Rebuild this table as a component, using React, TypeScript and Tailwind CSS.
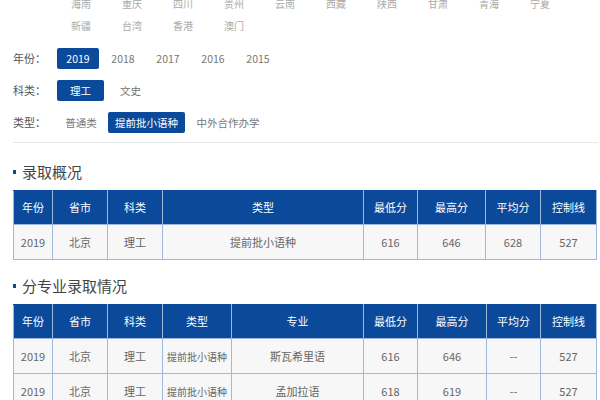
import React from 'react';

const font = {
	fontFamily: '"Noto Sans CJK SC", "Liberation Sans", sans-serif'
};

const provinceRows = [
	['海南', '重庆', '四川', '贵州', '云南', '西藏', '陕西', '甘肃', '青海', '宁夏'],
	['新疆', '台湾', '香港', '澳门']
];

interface FilterItem {
	label: string;
	width: string;
	active?: boolean;
}

const filters: { label: string; items: FilterItem[]; top: string }[] = [
	{
		label: '年份：',
		top: 'mt-[12px]',
		items: [
			{ label: '2019', width: 'w-[42px]', active: true },
			{ label: '2018', width: 'w-[42px]' },
			{ label: '2017', width: 'w-[42px]' },
			{ label: '2016', width: 'w-[42px]' },
			{ label: '2015', width: 'w-[42px]' }
		]
	},
	{
		label: '科类：',
		top: 'mt-[11px]',
		items: [
			{ label: '理工', width: 'w-[47px]', active: true },
			{ label: '文史', width: 'w-[47px]' }
		]
	},
	{
		label: '类型：',
		top: 'mt-[11px]',
		items: [
			{ label: '普通类', width: 'w-[48px]' },
			{ label: '提前批小语种', width: 'w-[77px]', active: true },
			{ label: '中外合作办学', width: 'w-[80px]' }
		]
	}
];

const FilterRow = ({ label, items, top }: (typeof filters)[number]) => (
	<div className={`flex items-center h-[21px] ${top}`}>
		<span className="w-[44px] text-[11px] text-[#555]">{label}</span>
		<div className="flex gap-[3px]">
			{items.map((item) => (
				<span
					key={item.label}
					className={`${item.width} h-[21px] flex items-center justify-center text-[10.5px] rounded-[2px] ${
						item.active ? 'bg-[#0b4a9b] text-white' : 'text-[#777]'
					}`}
				>
					{item.label}
				</span>
			))}
		</div>
	</div>
);

const SectionTitle = ({ children }: { children: React.ReactNode }) => (
	<div className="flex items-center h-[20px]">
		<span className="w-[3px] h-[4px] bg-[#0b4a9b] mr-[6px]" />
		<span className="text-[15px] text-[#444] leading-[20px]">{children}</span>
	</div>
);

const DataTable = ({
	cols,
	head,
	rows
}: {
	cols: number[];
	head: string[];
	rows: string[][];
}) => (
	<table className="table-fixed border-collapse w-[583px] text-[11px]">
		<colgroup>
			{cols.map((w, i) => (
				<col key={i} style={{ width: w }} />
			))}
		</colgroup>
		<thead>
			<tr className="h-[34px] bg-[#0b4a9b] text-white">
				{head.map((h) => (
					<th
						key={h}
						className="font-normal border border-[#9fb8dd] border-t-[#0b4a9b]"
					>
						{h}
					</th>
				))}
			</tr>
		</thead>
		<tbody>
			{rows.map((r, i) => (
				<tr key={i} className="h-[35px] bg-[#f7f7f7] text-[#666]">
					{r.map((c, j) => (
						<td
							key={j}
							className={`text-center border border-[#9fb8dd] ${
								c.length > 4 && cols.length > 8 && j === 3 ? 'text-[10px]' : ''
							}`}
						>
							{c}
						</td>
					))}
				</tr>
			))}
		</tbody>
	</table>
);

export default function App() {
	return (
		<div className="w-[600px] h-[400px] overflow-hidden bg-white" style={font}>
			<div className="pl-[13px] -mt-[8px]">
				<div className="pl-[44px]">
					{provinceRows.map((row, i) => (
						<div key={i} className="flex gap-[3px] h-[22px] items-center">
							{row.map((p) => (
								<span
									key={p}
									className="w-[48px] text-center text-[10px] text-[#aaa]"
								>
									{p}
								</span>
							))}
						</div>
					))}
				</div>
				{filters.map((f) => (
					<FilterRow key={f.label} {...f} />
				))}
				<div className="mt-[9px] h-px w-[585px] bg-[#e6e6e6]" />
				<div className="mt-[19px]">
					<SectionTitle>录取概况</SectionTitle>
				</div>
				<div className="mt-[8px]">
					<DataTable
						cols={[39, 55, 55, 201, 54, 68, 55, 56]}
						head={['年份', '省市', '科类', '类型', '最低分', '最高分', '平均分', '控制线']}
						rows={[['2019', '北京', '理工', '提前批小语种', '616', '646', '628', '527']]}
					/>
				</div>
				<div className="mt-[16px]">
					<SectionTitle>分专业录取情况</SectionTitle>
				</div>
				<div className="mt-[8px]">
					<DataTable
						cols={[39, 55, 55, 69, 132, 54, 69, 54, 56]}
						head={[
							'年份',
							'省市',
							'科类',
							'类型',
							'专业',
							'最低分',
							'最高分',
							'平均分',
							'控制线'
						]}
						rows={[
							['2019', '北京', '理工', '提前批小语种', '斯瓦希里语', '616', '646', '--', '527'],
							['2019', '北京', '理工', '提前批小语种', '孟加拉语', '618', '619', '--', '527']
						]}
					/>
				</div>
			</div>
		</div>
	);
}
